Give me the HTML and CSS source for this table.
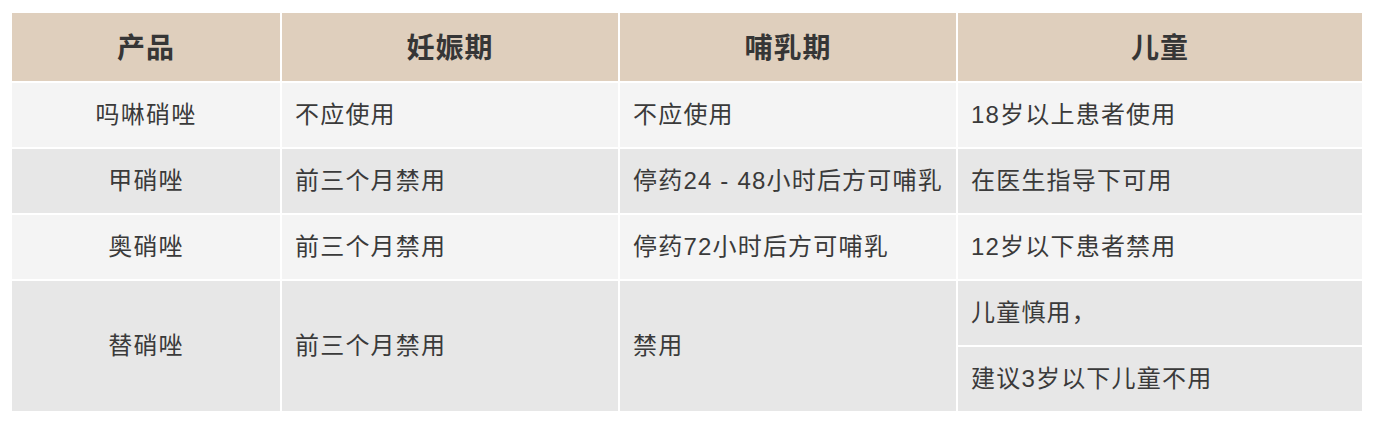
FILE: index.html
```html
<!DOCTYPE html>
<html lang="zh">
<head>
<meta charset="utf-8">
<link rel="stylesheet" href="styles.css">
</head>
<body>
<table class="drug-table">
  <colgroup>
    <col class="c1"><col class="c2"><col class="c3"><col class="c4">
  </colgroup>
  <thead>
    <tr>
      <th>产品</th>
      <th>妊娠期</th>
      <th>哺乳期</th>
      <th>儿童</th>
    </tr>
  </thead>
  <tbody>
    <tr class="light">
      <td class="name">吗啉硝唑</td>
      <td>不应使用</td>
      <td>不应使用</td>
      <td>18岁以上患者使用</td>
    </tr>
    <tr class="dark">
      <td class="name">甲硝唑</td>
      <td>前三个月禁用</td>
      <td>停药24 - 48小时后方可哺乳</td>
      <td>在医生指导下可用</td>
    </tr>
    <tr class="light">
      <td class="name">奥硝唑</td>
      <td>前三个月禁用</td>
      <td>停药72小时后方可哺乳</td>
      <td>12岁以下患者禁用</td>
    </tr>
    <tr class="dark">
      <td class="name" rowspan="2">替硝唑</td>
      <td rowspan="2">前三个月禁用</td>
      <td rowspan="2">禁用</td>
      <td>儿童慎用，</td>
    </tr>
    <tr class="dark">
      <td>建议3岁以下儿童不用</td>
    </tr>
  </tbody>
</table>
</body>
</html>
```

FILE: styles.css
```css
html, body {
  margin: 0;
  padding: 0;
  background: #ffffff;
}

body {
  font-family: "Liberation Sans", "Noto Sans CJK SC", sans-serif;
  color: #3a3a3a;
}

.drug-table {
  margin: 11px 0 0 10px;
  width: 1354px;
  table-layout: fixed;
  border-collapse: separate;
  border-spacing: 2px;
}

.c1 { width: 268px; }
.c2 { width: 336px; }
.c3 { width: 336px; }
.c4 { width: 404px; }

.drug-table th {
  background: #dfcfbd;
  height: 66px;
  padding: 0 0 2px 0;
  font-size: 28px;
  font-weight: bold;
  letter-spacing: 1px;
  color: #363636;
  text-align: center;
  vertical-align: middle;
}

.drug-table td {
  height: 59px;
  padding: 0 0 5px 13px;
  font-size: 24px;
  letter-spacing: 1.2px;
  text-align: left;
  vertical-align: middle;
  white-space: nowrap;
}

.drug-table td.name {
  text-align: center;
  padding: 0 0 5px 0;
}

.light td { background: #f4f4f4; }
.dark td { background: #e7e7e7; }
```
